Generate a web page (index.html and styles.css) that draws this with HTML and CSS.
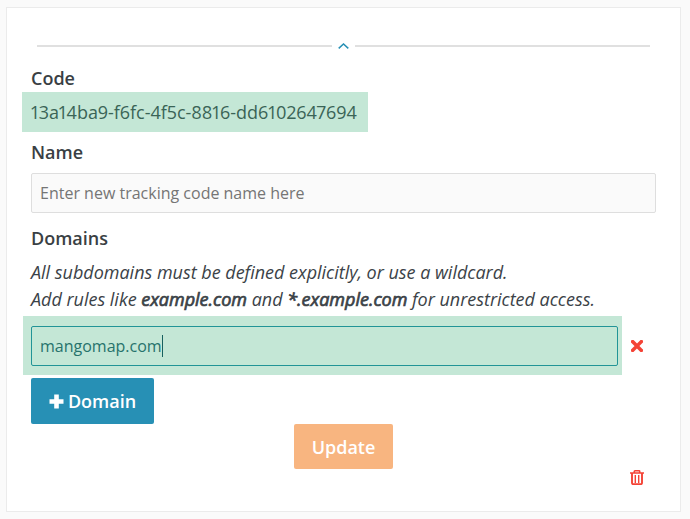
FILE: index.html
```html
<!DOCTYPE html>
<html lang="en">
<head>
<meta charset="utf-8">
<title>Tracking code</title>
<link rel="stylesheet" href="styles.css">
</head>
<body>
<main class="card">
  <div class="divider">
    <span class="line"></span>
    <svg class="chevron" width="11" height="6" viewBox="0 0 11 6"><path d="M.7 5.4 5.5 1l4.8 4.4" fill="none" stroke="#2790b5" stroke-width="1.5"/></svg>
    <span class="line"></span>
  </div>
  <h2 class="label">Code</h2>
  <div class="code"><span class="code-text">13a14ba9-f6fc-4f5c-8816-dd6102647694</span></div>
  <h2 class="label label-name">Name</h2>
  <div class="field"><span class="placeholder">Enter new tracking code name here</span></div>
  <h2 class="label label-domains">Domains</h2>
  <p class="hint"><span class="hint-one">All subdomains must be defined explicitly, or use a wildcard.</span><br><span class="hint-two">Add rules like <b>example.com</b> and <b>*.example.com</b> for unrestricted access.</span></p>
  <div class="domain-row">
    <div class="highlight"><div class="field active"><span class="value">mangomap.com</span><span class="caret"></span></div></div>
    <svg class="remove" width="12" height="12" viewBox="0 0 12 12"><path d="M1.6 1.6l8.8 8.8M10.4 1.6l-8.8 8.8" stroke="#f44336" stroke-width="3.5" stroke-linecap="square" stroke-linejoin="round"/></svg>
  </div>
  <button class="btn add"><svg width="15" height="15" viewBox="0 0 15 15"><path d="M7.5 0.5v14M0.5 7.5h14" stroke="#fff" stroke-width="4.6"/></svg><span class="btn-text">Domain</span></button>
  <button class="btn update"><span class="btn-text">Update</span></button>
  <svg class="trash" width="14" height="15" viewBox="0 0 14 15"><path d="M0 3h14M4.3 3V1.4q0-.6.6-.6h4.2q.6 0 .6.6V3" fill="none" stroke="#f44336" stroke-width="1.6"/><path d="M2 3v10.1q0 1 1 1h8q1 0 1-1V3" fill="none" stroke="#f44336" stroke-width="1.9"/><path d="M5.3 5v8M8.7 5v8" stroke="#f44336" stroke-width="1.4"/></svg>
</main>
</body>
</html>
```
FILE: styles.css
```css
* { box-sizing: border-box; }
body {
  margin: 0;
  padding: 7px 0 0 6px;
  background: #fafafa;
  color: #3b4247;
  font-family: "Open Sans", sans-serif;
  font-size: 18px;
}
.card {
  display: flex;
  flex-direction: column;
  align-items: flex-start;
  width: 675px;
  height: 505px;
  padding: 34px 24px 0;
  background: #fff;
  border: 1px solid #ebebeb;
}
.divider {
  display: flex;
  align-items: center;
  gap: 6px;
  width: 613px;
  height: 8px;
  margin-left: 6px;
}
.line { flex: 1; height: 2px; background: #e0e0e0; }
.chevron { flex: none; }
.label {
  margin: 15px 0 0;
  color: #3a3f44;
  font-size: 18px;
  font-weight: 600;
  line-height: 27px;
}
.code {
  display: flex;
  align-items: center;
  width: 346px;
  height: 40px;
  margin-left: -9px;
  padding-left: 9px;
  background: #c4e7d6;
  color: #3a6456;
  font-variant-numeric: proportional-nums;
  font-weight: 400;
  letter-spacing: -0.04px;
  white-space: nowrap;
}
.label-name { margin-top: 7px; }
.field {
  display: flex;
  align-items: center;
  width: 625px;
  height: 40px;
  margin-top: 7px;
  padding-left: 8px;
  border: 1px solid #dedede;
  border-radius: 2px;
  background: #fafafa;
  color: #757575;
  font-size: 16px;
}
.label-domains { margin-top: 12px; }
.hint {
  margin: 7px 0 0;
  font-style: italic;
  line-height: 27px;
  letter-spacing: -0.015px;
  white-space: nowrap;
}
.hint b { font-weight: 400; -webkit-text-stroke: 0.7px currentColor; }
.domain-row { display: flex; align-items: center; gap: 9px; margin: 3px 0 0 -8px; }
.highlight { width: 599px; height: 59px; padding: 10px 4px 9px 8px; background: #c4e7d6; }
.active {
  width: 587px;
  margin: 0;
  background: transparent;
  border-color: #229497;
  color: #27736c;
}
.caret { width: 1px; height: 22px; background: #17605e; }
.btn {
  display: flex;
  align-items: center;
  justify-content: center;
  padding: 0;
  border: 0;
  border-radius: 2px;
  color: #fff;
  font: 600 18px "Open Sans", sans-serif;
}
.add { gap: 4px; width: 123px; height: 46px; margin-top: 3px; background: #2790b5; }
.update { align-self: center; width: 99px; height: 45px; background: #f8b580; }
.trash { align-self: flex-end; margin: 1px 12px 0 0; }
```
